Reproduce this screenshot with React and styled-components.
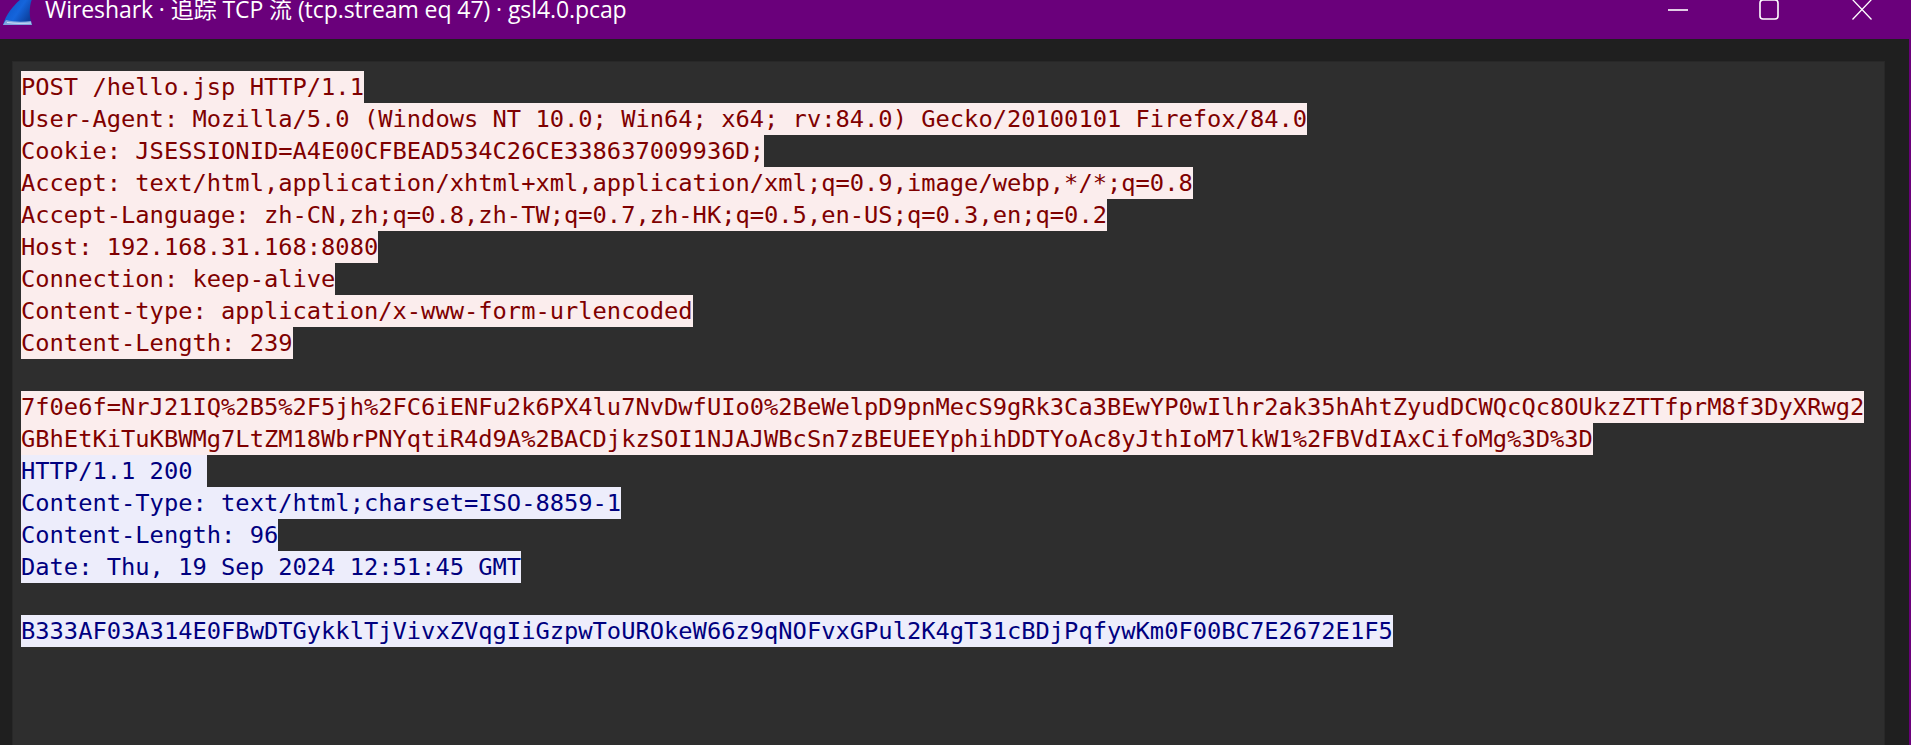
import React from "react";
import styled, { createGlobalStyle } from "styled-components";

const Global = createGlobalStyle`
  html, body { margin: 0; padding: 0; height: 100%; background: #1f1f1f; overflow: hidden; }
  #root { height: 100%; }
`;

const Frame = styled.div`
  height: 745px;
  width: 1911px;
  display: flex;
  flex-direction: column;
  overflow: hidden;
  background: #6a007b;
  box-sizing: border-box;
  padding-right: 2px;
`;

const TitleBar = styled.header`
  flex: 0 0 39px;
  height: 39px;
  margin-right: -2px;
  display: flex;
  align-items: flex-start;
  background: #6a007b;
  color: #fff;
  overflow: hidden;
`;

const Logo = styled.svg`
  flex: none;
  width: 30px;
  height: 26px;
  margin-left: 3px;
`;

const Title = styled.div`
  flex: 1;
  margin-left: 12px;
  font: 400 23px/18px "Open Sans", "Noto Sans CJK SC", sans-serif;
  letter-spacing: -0.08px;
  white-space: nowrap;
`;

const WinButton = styled.svg`
  flex: none;
  display: block;
  width: 20px;
  height: 21px;
  margin-left: ${(p) => p.$gap}px;
`;

const Controls = styled.div`
  display: flex;
  padding-right: 39px;
`;

const Body = styled.main`
  flex: 1;
  min-height: 0;
  background: #1f1f1f;
  padding: 22px 24px 0 12px;
  display: flex;
`;

const Stream = styled.section`
  flex: 1;
  box-sizing: border-box;
  border: 1px solid #282828;
  border-bottom: 0;
  background: #2e2e2e;
  padding: 9px 8px 0;
  font: 400 23.74px/32px "DejaVu Sans Mono", monospace;
`;

const Line = styled.div`
  height: 32px;
  white-space: pre;
`;

const Chunk = styled.span`
  display: inline-block;
  height: 32px;
  background: ${(p) => (p.$side === "c" ? "#fbeded" : "#ededfb")};
  color: ${(p) => (p.$side === "c" ? "#7f0000" : "#00007f")};
`;

const lines = [
  ["c", "POST /hello.jsp HTTP/1.1"],
  ["c", "User-Agent: Mozilla/5.0 (Windows NT 10.0; Win64; x64; rv:84.0) Gecko/20100101 Firefox/84.0"],
  ["c", "Cookie: JSESSIONID=A4E00CFBEAD534C26CE338637009936D;"],
  ["c", "Accept: text/html,application/xhtml+xml,application/xml;q=0.9,image/webp,*/*;q=0.8"],
  ["c", "Accept-Language: zh-CN,zh;q=0.8,zh-TW;q=0.7,zh-HK;q=0.5,en-US;q=0.3,en;q=0.2"],
  ["c", "Host: 192.168.31.168:8080"],
  ["c", "Connection: keep-alive"],
  ["c", "Content-type: application/x-www-form-urlencoded"],
  ["c", "Content-Length: 239"],
  ["c", ""],
  ["c", "7f0e6f=NrJ21IQ%2B5%2F5jh%2FC6iENFu2k6PX4lu7NvDwfUIo0%2BeWelpD9pnMecS9gRk3Ca3BEwYP0wIlhr2ak35hAhtZyudDCWQcQc8OUkzZTTfprM8f3DyXRwg2"],
  ["c", "GBhEtKiTuKBWMg7LtZM18WbrPNYqtiR4d9A%2BACDjkzSOI1NJAJWBcSn7zBEUEEYphihDDTYoAc8yJthIoM7lkW1%2FBVdIAxCifoMg%3D%3D"],
  ["s", "HTTP/1.1 200 "],
  ["s", "Content-Type: text/html;charset=ISO-8859-1"],
  ["s", "Content-Length: 96"],
  ["s", "Date: Thu, 19 Sep 2024 12:51:45 GMT"],
  ["s", ""],
  ["s", "B333AF03A314E0FBwDTGykklTjVivxZVqgIiGzpwToUROkeW66z9qNOFvxGPul2K4gT31cBDjPqfywKm0F00BC7E2672E1F5"],
];

export default function App() {
  return (
    <>
      <Global />
      <Frame>
        <TitleBar>
          <Logo viewBox="0 0 30 26">
            <defs>
              <linearGradient id="fin" x1="0" y1="0" x2="1" y2="0.6">
                <stop offset="0" stopColor="#0a4fc0" />
                <stop offset="0.6" stopColor="#1565dc" />
                <stop offset="1" stopColor="#0c3f9c" />
              </linearGradient>
            </defs>
            <path d="M0 25 C3 14 11 5 18 -1 L29 -1 C26 7 26 17 29 25 Z" fill="url(#fin)" />
            <path d="M0 25 C1 23 2 21 3 20 C11 22 20 22 28 21 L29 25 Z" fill="#7fa6e0" />
            <path d="M4 22.5 C12 23.5 20 23.5 28 23" stroke="#cfe0f7" strokeWidth="1" fill="none" />
          </Logo>
          <Title>Wireshark · 追踪 TCP 流 (tcp.stream eq 47) · gsl4.0.pcap</Title>
          <Controls>
            <WinButton viewBox="0 0 20 21">
              <path d="M0 10h20" stroke="#fff" strokeWidth="1.6" />
            </WinButton>
            <WinButton $gap={71} viewBox="0 0 20 21">
              <rect x="1" y="0" width="18" height="19" rx="3" fill="none" stroke="#fff" strokeWidth="1.6" />
            </WinButton>
            <WinButton $gap={73} viewBox="0 0 20 21">
              <path d="M0.5 -0.5L19.5 19.5M19.5 -0.5L0.5 19.5" stroke="#fff" strokeWidth="1.3" fill="none" />
            </WinButton>
          </Controls>
        </TitleBar>
        <Body>
          <Stream>
            {lines.map(([side, text], i) => (
              <Line key={i}>{text && <Chunk $side={side}>{text}</Chunk>}</Line>
            ))}
          </Stream>
        </Body>
      </Frame>
    </>
  );
}
